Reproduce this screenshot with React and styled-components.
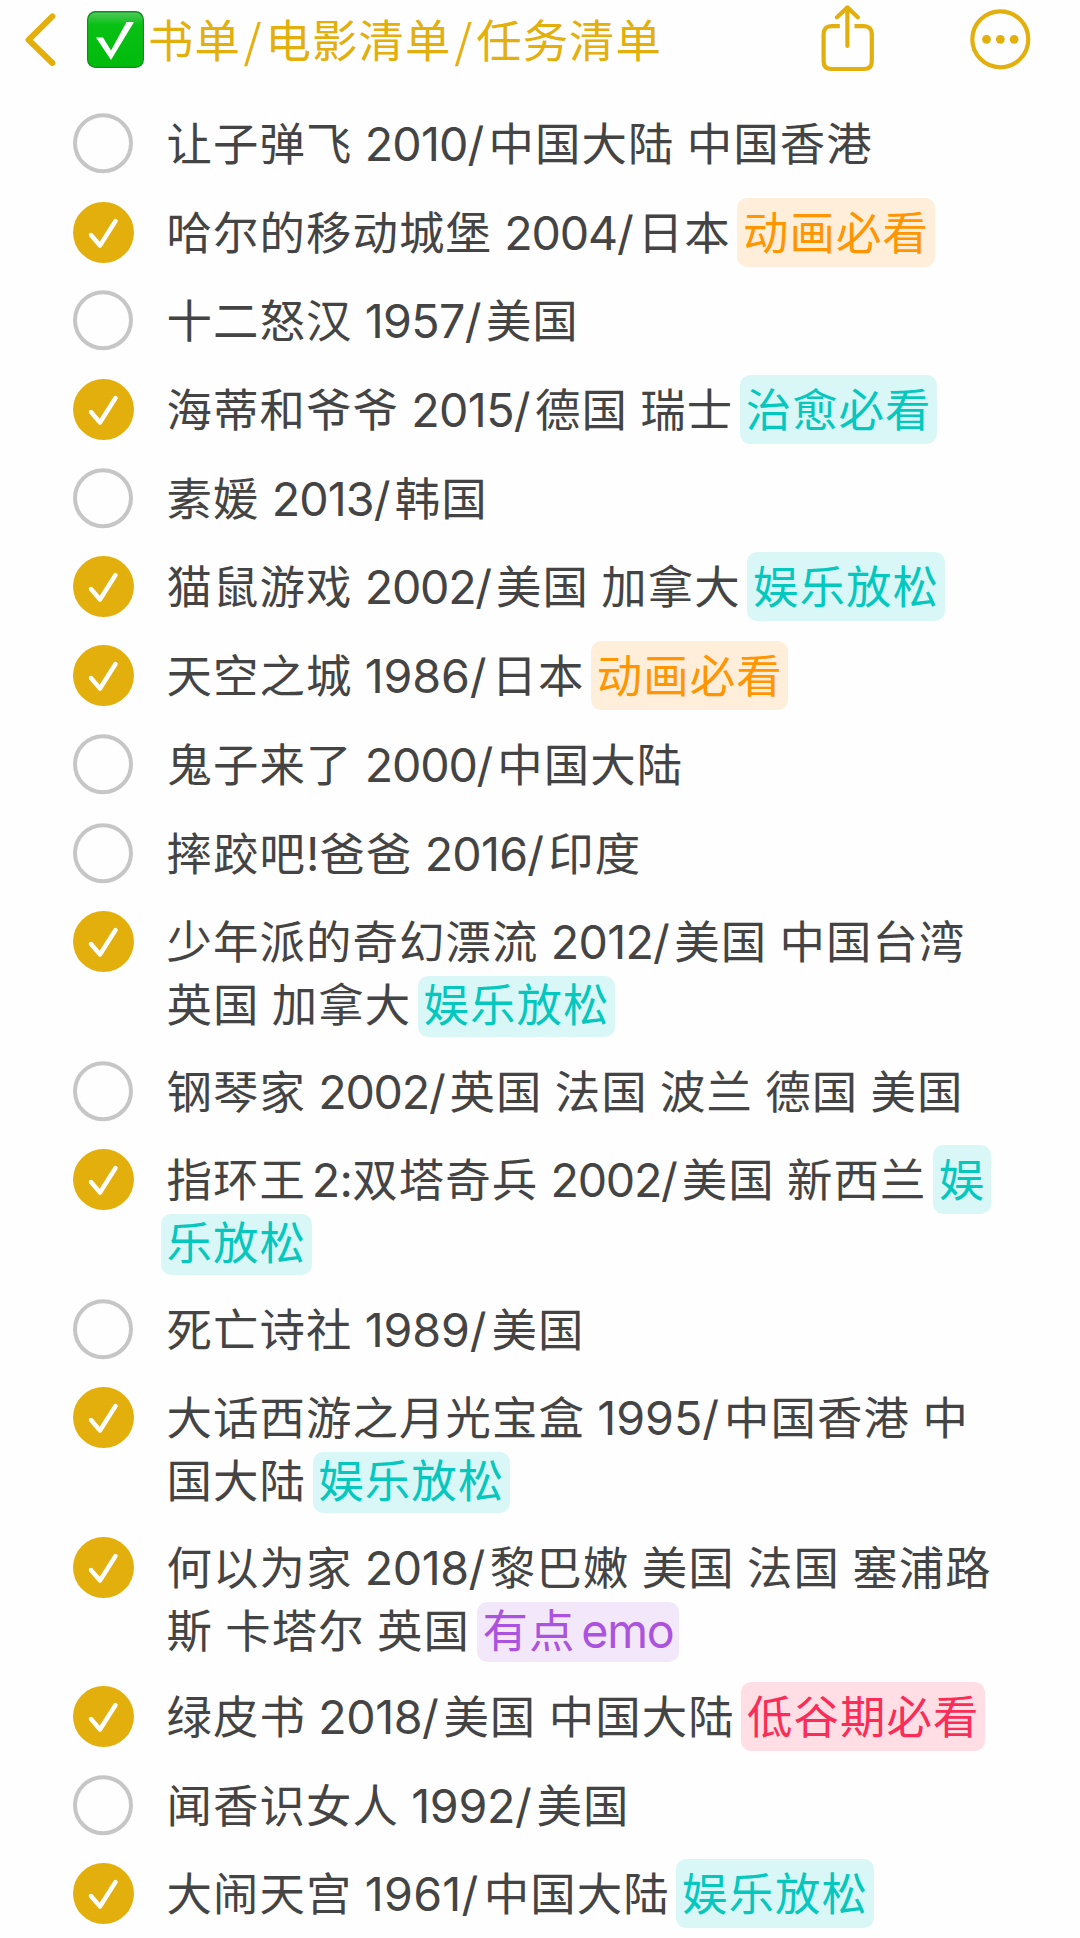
import React from 'react';
import styled, { createGlobalStyle, css } from 'styled-components';

const GlobalStyle = createGlobalStyle`
  body {
    margin: 0;
    background: #fefefe;
    overflow: hidden;
  }
`;

const ACCENT = '#e3af0c';
const TAGS = {
  orange: { color: '#ff9500', background: '#ffeeda' },
  teal: { color: '#06c7be', background: '#d9f7f6' },
  purple: { color: '#ab53de', background: '#f3e7fa' },
  pink: { color: '#fa2d58', background: '#ffdfe5' },
};

const Page = styled.main`
  width: 1080px;
  height: 1938px;
  overflow: hidden;
  box-sizing: border-box;
  font-family: 'Noto Sans CJK SC', sans-serif;
  font-size: 45.4px;
  letter-spacing: 1.1px;
  color: #444;
`;

const Header = styled.header`
  display: flex;
  align-items: flex-start;
  height: 109px;
  box-sizing: border-box;
  padding: 4px 49px 0 25px;
  color: ${ACCENT};
`;

const Icon = styled.svg`
  display: block;
  flex: none;
  margin-left: ${(p) => p.$gap || 0}px;
  margin-top: ${(p) => p.$drop || 0}px;
  fill: none;
  stroke: currentColor;
  stroke-linecap: round;
  stroke-linejoin: round;
`;

const Title = styled.h1`
  flex: 1;
  margin: 0 0 0 4px;
  font-size: inherit;
  font-weight: 400;
  line-height: 69px;
  white-space: nowrap;
`;

const Slash = styled.span`
  display: inline-block;
  width: 24.6px;
  text-align: center;
`;

const List = styled.ul`
  display: flex;
  flex-direction: column;
  gap: 19.7px;
  margin: 0;
  padding: 0 0 0 73px;
  list-style: none;
`;

const Item = styled.li`
  display: flex;
  align-items: flex-start;
  gap: 32.5px;
`;

const CheckBox = styled.span`
  display: flex;
  flex: none;
  align-items: center;
  width: 61px;
  height: 69px;
`;

const Lines = styled.div`
  display: flex;
  flex-direction: column;
`;

const Line = styled.div`
  display: flex;
  white-space: pre;
  height: 69px;
  line-height: 64px;
  ${(p) =>
    p.$continued &&
    css`
      height: 60.7px;
      line-height: 53px;
    `}
`;

const Latin = styled.span`
  font-family: Inter, sans-serif;
  font-size: 46.6px;
  line-height: 1;
  letter-spacing: ${(p) => p.$tracking}px;
  margin-left: ${(p) => p.$before || 0}px;
  margin-right: ${(p) => p.$after || 0}px;
`;

const Tag = styled.mark`
  margin: 0 -5.7px;
  padding: 0 5.7px;
  border-radius: 10px;
  color: ${(p) => TAGS[p.$tone].color};
  background: ${(p) => TAGS[p.$tone].background};
`;

// Letter spacing that evens out the width of each Latin run.
const TRACKING = {
  ' ': -0.8,
  '!': 0,
  '2:': -0.7,
  emo: -1.2,
  '2010/': -0.85,
  '2004/': -1.14,
  '1957/': -0.65,
  '2015/': -0.62,
  '2013/': -0.9,
  '2002/': -1.26,
  '1986/': -0.15,
  '2000/': -1.2,
  '2016/': -0.77,
  '2012/': -0.71,
  '1989/': -0.13,
  '1995/': 0,
  '2018/': -0.46,
  '1992/': -0.35,
  '1961/': 0.28,
};

const films = [
  { lines: [['让子弹飞 2010/中国大陆 中国香港']] },
  { done: true, lines: [['哈尔的移动城堡 2004/日本 ', { tag: '动画必看', tone: 'orange' }]] },
  { lines: [['十二怒汉 1957/美国']] },
  { done: true, lines: [['海蒂和爷爷 2015/德国 瑞士 ', { tag: '治愈必看', tone: 'teal' }]] },
  { lines: [['素媛 2013/韩国']] },
  { done: true, lines: [['猫鼠游戏 2002/美国 加拿大 ', { tag: '娱乐放松', tone: 'teal' }]] },
  { done: true, lines: [['天空之城 1986/日本 ', { tag: '动画必看', tone: 'orange' }]] },
  { lines: [['鬼子来了 2000/中国大陆']] },
  { lines: [['摔跤吧!爸爸 2016/印度']] },
  {
    done: true,
    lines: [['少年派的奇幻漂流 2012/美国 中国台湾'], ['英国 加拿大 ', { tag: '娱乐放松', tone: 'teal' }]],
  },
  { lines: [['钢琴家 2002/英国 法国 波兰 德国 美国']] },
  {
    done: true,
    lines: [
      ['指环王2:双塔奇兵 2002/美国 新西兰 ', { tag: '娱', tone: 'teal' }],
      [{ tag: '乐放松', tone: 'teal' }],
    ],
  },
  { lines: [['死亡诗社 1989/美国']] },
  {
    done: true,
    lines: [['大话西游之月光宝盒 1995/中国香港 中'], ['国大陆 ', { tag: '娱乐放松', tone: 'teal' }]],
  },
  {
    done: true,
    lines: [['何以为家 2018/黎巴嫩 美国 法国 塞浦路'], ['斯 卡塔尔 英国 ', { tag: '有点emo', tone: 'purple' }]],
  },
  { done: true, lines: [['绿皮书 2018/美国 中国大陆 ', { tag: '低谷期必看', tone: 'pink' }]] },
  { lines: [['闻香识女人 1992/美国']] },
  { done: true, lines: [['大闹天宫 1961/中国大陆 ', { tag: '娱乐放松', tone: 'teal' }]] },
];

function Bullet({ done }) {
  return (
    <CheckBox>
      {done ? (
        <Icon width="61" height="61" viewBox="0 0 61 61">
          <circle cx="30.5" cy="30.5" r="30.5" fill={ACCENT} stroke="none" />
          <path d="M18 33L27 43.5L42.5 19" stroke="#fff" strokeWidth="4.4" />
        </Icon>
      ) : (
        <Icon width="61" height="61" viewBox="0 0 61 61">
          <circle cx="30" cy="30.2" r="28" stroke="#c6c6c6" strokeWidth="4" />
        </Icon>
      )}
    </CheckBox>
  );
}

function MixedText({ text }) {
  return (
    <span>
      {text.split(/( |[!-~]+)/).map((run, i) => {
        if (i % 2 === 0) return run;
        return (
          <Latin
            key={i}
            $tracking={TRACKING[run]}
            $before={/^(2:|emo)$/.test(run) ? 5.8 : 0}
            $after={run.endsWith('/') ? 5 : 0}
          >
            {run}
          </Latin>
        );
      })}
    </span>
  );
}

export default function App() {
  return (
    <Page>
      <GlobalStyle />
      <Header>
        <Icon $drop={7} width="34" height="58" viewBox="0 0 34 58" strokeWidth="6">
          <path d="M27.4 5.4L3.6 28.8L27.4 52" />
        </Icon>
        <Icon $gap={28} $drop={7} width="57" height="57" viewBox="0 0 57 57">
          <defs>
            <linearGradient id="gloss" x1="0" y1="0" x2="0" y2="1">
              <stop offset="0" stopColor="#4fc85a" />
              <stop offset="0.22" stopColor="#08c114" />
              <stop offset="1" stopColor="#00ba0c" />
            </linearGradient>
          </defs>
          <rect width="57" height="57" rx="8.5" fill="#0b8f1c" stroke="none" />
          <rect x="1.2" y="1.6" width="54.6" height="54.2" rx="7.5" fill="url(#gloss)" stroke="none" />
          <path d="M9 26.5H16L24 39.5L39.5 11H47L24 49Z" fill="#fff" stroke="none" />
        </Icon>
        <Title>
          书单<Slash>/</Slash>电影清单<Slash>/</Slash>任务清单
        </Title>
        <Icon $drop={1} width="54" height="69" viewBox="0 0 54 69" strokeWidth="4.2">
          <path
            d="M18.8 21.2H10.5Q2.6 21.2 2.6 29V56.3Q2.6 64 10.5 64H43Q50.8 64 50.8 56.3V29Q50.8 21.2 43 21.2H33.5"
            strokeLinecap="butt"
          />
          <path d="M26.4 41V3.5M16 12.2L26.4 2.4L36.8 12.2" />
        </Icon>
        <Icon $gap={95} $drop={5} width="61" height="61" viewBox="0 0 61 61">
          <circle cx="30.3" cy="30.3" r="28" strokeWidth="4.2" />
          <g fill="currentColor" stroke="none">
            <circle cx="16.5" cy="30.3" r="4.4" />
            <circle cx="30.3" cy="30.3" r="4.4" />
            <circle cx="44.1" cy="30.3" r="4.4" />
          </g>
        </Icon>
      </Header>
      <List>
        {films.map((film, i) => (
          <Item key={i}>
            <Bullet done={film.done} />
            <Lines>
              {film.lines.map((line, j) => (
                <Line key={j} $continued={j > 0}>
                  {line.map((part, k) =>
                    typeof part === 'string' ? (
                      <MixedText key={k} text={part} />
                    ) : (
                      <Tag key={k} $tone={part.tone}>
                        <MixedText text={part.tag} />
                      </Tag>
                    ),
                  )}
                </Line>
              ))}
            </Lines>
          </Item>
        ))}
      </List>
    </Page>
  );
}
